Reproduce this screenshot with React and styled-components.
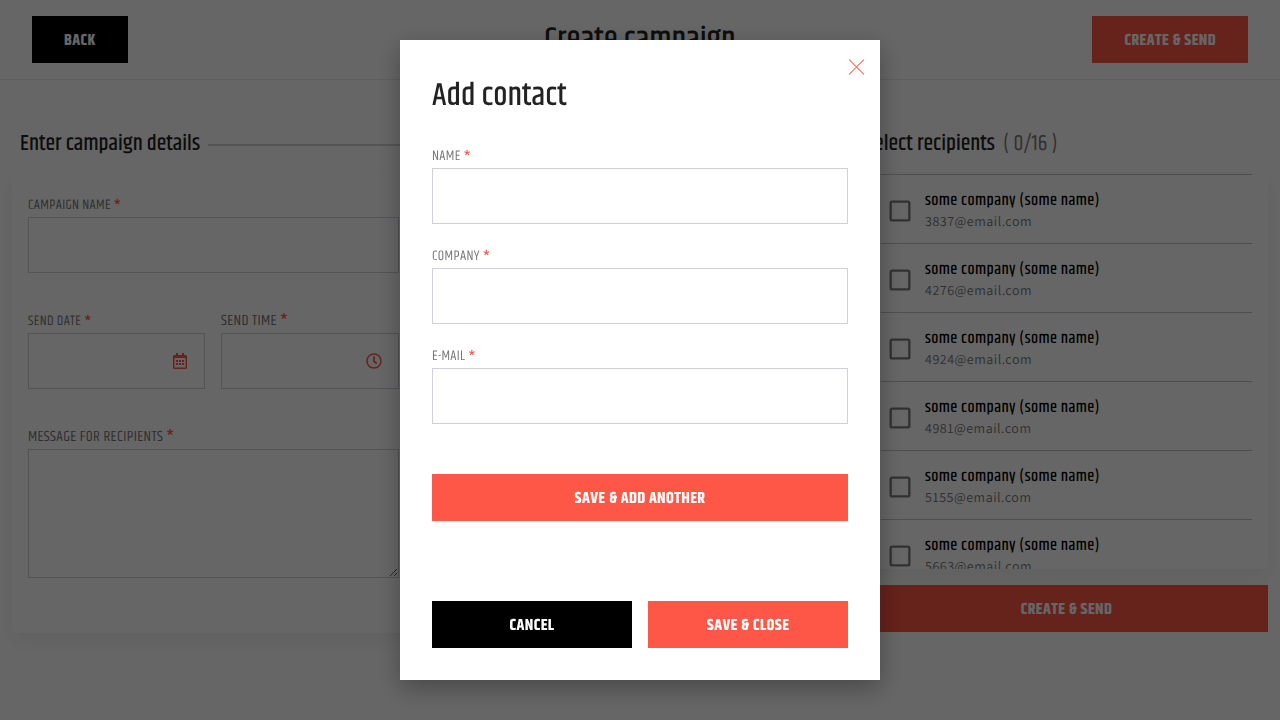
import React from "react";
import styled, { createGlobalStyle, css } from "styled-components";
import { FaRegCalendarAlt, FaRegClock } from "react-icons/fa";
import { MdCheckBoxOutlineBlank } from "react-icons/md";

const ACCENT = "#ff5747";

const GlobalStyle = createGlobalStyle`
  *, *::before, *::after { box-sizing: border-box; }
  html, body { margin: 0; height: 100%; overflow: hidden; background: #fff; }
  body {
    font-family: Khand, "Liberation Sans Narrow", Roboto, sans-serif;
    color: #222;
    text-rendering: geometricPrecision;
  }
  button, input, textarea { font: inherit; margin: 0; text-rendering: inherit; }
`;

const Page = styled.div`
  height: 720px;
  overflow: hidden;
  background: #fff;
`;

const Header = styled.header`
  display: grid;
  grid-template-columns: 1fr auto 1fr;
  align-items: start;
  height: 80px;
  padding: 16px 32px 0;
  border-bottom: 1px solid #ededee;
`;

const HeaderEnd = styled.div`
  display: flex;
  justify-content: flex-end;
`;

const HeaderStart = styled.div`
  display: flex;
`;

const PageTitle = styled.h1`
  margin: 0;
  font-size: 32px;
  line-height: 49px;
  font-weight: 500;
  white-space: nowrap;
`;

const Button = styled.button`
  display: flex;
  align-items: center;
  justify-content: center;
  height: 47px;
  padding: 2px 32px 0;
  border: 0;
  border-radius: 0;
  background: ${(p) => (p.$dark ? "#000" : ACCENT)};
  color: #fff;
  font-size: 16px;
  line-height: 25px;
  font-weight: 700;
  letter-spacing: 0.4px;
  white-space: nowrap;
  ${(p) => p.$block && css`width: 100%;`}
`;

const Columns = styled.main`
  display: flex;
  justify-content: space-between;
  padding: 48px 12px 0;
`;

const Column = styled.section`
  width: 403px;
`;

const SectionHead = styled.div`
  display: flex;
  align-items: center;
  height: 46px;
  padding: 0 0 14px ${(p) => (p.$flush ? 0 : 8)}px;
  white-space: nowrap;
`;

const SectionTitle = styled.h2`
  margin: 0;
  font-size: 22px;
  line-height: 32px;
  font-weight: 500;
  ${(p) => p.$width && css`width: ${p.$width}px; text-align: right;`}
`;

const Rule = styled.div`
  flex: 1;
  height: 2px;
  margin: 2px 0 0 8px;
  background: #d2d2d2;
`;

const Count = styled.span`
  margin-left: 8px;
  font-size: 22px;
  line-height: 32px;
  font-weight: 400;
  color: #757575;
`;

const Card = styled.div`
  background: #fff;
  box-shadow: 0 8px 18px rgba(0, 0, 0, 0.06);
`;

const FormCard = styled(Card)`
  display: flex;
  flex-direction: column;
  gap: 35px;
  height: 459px;
  padding: 18px 16px 0;
`;

const FieldRow = styled.div`
  display: grid;
  grid-template-columns: 177px 178px;
  gap: 16px;
`;

const FieldBox = styled.label`
  display: block;
`;

const LabelText = styled.span`
  display: flex;
  height: 25px;
  font-size: ${(p) => (p.$large ? 15 : 14)}px;
  line-height: 27px;
  font-weight: 400;
  letter-spacing: ${(p) => (p.$large ? 0.37 : 0.33)}px;
  color: #757575;
  white-space: nowrap;
`;

const Star = styled.span`
  margin-left: 3px;
  letter-spacing: 0;
  line-height: ${(p) => (p.$large ? 27 : 28)}px;
  font-weight: 500;
  color: ${ACCENT};
`;

const Control = styled.span`
  display: flex;
  align-items: center;
  height: 56px;
  border: 1px solid #d0d0dc;
  padding-right: ${(p) => p.$inset || 0}px;
  background: #fff;
  color: ${ACCENT};
`;

const Input = styled.input`
  flex: 1;
  min-width: 0;
  height: 100%;
  padding: 0 12px;
  border: 0;
  outline: 0;
  background: transparent;
`;

const TextArea = styled.textarea`
  display: block;
  width: 100%;
  height: 129px;
  border: 1px solid #d0d0d6;
  border-radius: 0;
  outline: 0;
  background: #fff;
  resize: both;
`;

function Field({ label, large, icon, inset, multiline }) {
  return (
    <FieldBox>
      <LabelText $large={large}>
        {label}
        <Star $large={large}>*</Star>
      </LabelText>
      {multiline ? <TextArea /> : (
        <Control $inset={inset}>
          <Input />
          {icon}
        </Control>
      )}
    </FieldBox>
  );
}

const ListCard = styled(Card)`
  height: 395px;
  padding: 0 16px;
  margin-bottom: 16px;
  overflow: hidden;
`;

const Recipient = styled.div`
  display: flex;
  height: 69px;
  border-top: 1px solid #c6c6c6;
  padding: 22px 0 0 5px;
`;

const CheckIcon = styled(MdCheckBoxOutlineBlank)`
  flex: none;
  width: 28px;
  height: 28px;
  color: #7c7c7c;
`;

const RecipientText = styled.div`
  display: flex;
  flex-direction: column;
  margin: -9px 0 0 11px;
  white-space: nowrap;
`;

const Company = styled.div`
  height: 24px;
  font-size: 16px;
  line-height: 25px;
  font-weight: 500;
  letter-spacing: 0.4px;
  color: #000;
`;

const Email = styled.div`
  height: 20px;
  font-family: Assistant, "Source Sans Pro", "Noto Sans CJK SC", sans-serif;
  font-size: 14px;
  line-height: 20px;
  letter-spacing: 0.5px;
  color: #757575;
`;

const Overlay = styled.div`
  position: fixed;
  inset: 0;
  display: flex;
  align-items: center;
  justify-content: center;
  background: rgba(0, 0, 0, 0.6);
`;

const Dialog = styled.div`
  position: relative;
  display: flex;
  flex-direction: column;
  width: 480px;
  height: 640px;
  padding: 34px 32px 32px;
  background: #fff;
  box-shadow: 0 8px 24px rgba(0, 0, 0, 0.3);
`;

const CloseButton = styled.button`
  position: absolute;
  top: 18px;
  right: 15px;
  width: 17px;
  height: 18px;
  padding: 0;
  border: 0;
  background: none;
  color: ${ACCENT};
  svg { display: block; }
`;

const DialogTitle = styled.h2`
  margin: 0 0 24px;
  font-size: 32px;
  line-height: 45px;
  font-weight: 500;
`;

const DialogFields = styled.div`
  display: flex;
  flex-direction: column;
  gap: 19px;
  margin-bottom: 50px;
`;

const DialogFooter = styled.div`
  display: grid;
  grid-template-columns: 1fr 1fr;
  gap: 16px;
  margin-top: auto;
`;

const EMAILS = ["3837", "4276", "4924", "4981", "5155", "5663"];

export default function App() {
  return (
    <>
      <GlobalStyle />
      <Page>
        <Header>
          <HeaderStart><Button $dark>BACK</Button></HeaderStart>
          <PageTitle>Create campaign</PageTitle>
          <HeaderEnd><Button>CREATE &amp; SEND</Button></HeaderEnd>
        </Header>
        <Columns>
          <Column>
            <SectionHead>
              <SectionTitle>Enter campaign details</SectionTitle>
              <Rule />
            </SectionHead>
            <FormCard>
              <Field label="CAMPAIGN NAME" />
              <FieldRow>
                <Field label="SEND DATE" inset={16} icon={<FaRegCalendarAlt size={16} />} />
                <Field label="SEND TIME" large inset={16} icon={<FaRegClock size={16} />} />
              </FieldRow>
              <Field label="MESSAGE FOR RECIPIENTS" large multiline />
            </FormCard>
          </Column>
          <Column>
            <SectionHead $flush>
              <SectionTitle $width={130}>Select recipients</SectionTitle>
              <Count>( 0/16 )</Count>
            </SectionHead>
            <ListCard>
              {EMAILS.map((id) => (
                <Recipient key={id}>
                  <CheckIcon />
                  <RecipientText>
                    <Company>some company (some name)</Company>
                    <Email>{`${id}@email.com`}</Email>
                  </RecipientText>
                </Recipient>
              ))}
            </ListCard>
            <Button $block>CREATE &amp; SEND</Button>
          </Column>
        </Columns>
      </Page>
      <Overlay>
        <Dialog role="dialog" aria-modal="true">
          <CloseButton aria-label="Close">
            <svg width="17" height="18" viewBox="0 0 17 18" fill="none" stroke="currentColor" strokeWidth="1.05">
              <path d="M1 1.5 L16 16.5 M16 1.5 L1 16.5" />
            </svg>
          </CloseButton>
          <DialogTitle>Add contact</DialogTitle>
          <DialogFields>
            <Field label="NAME" />
            <Field label="COMPANY" />
            <Field label="E-MAIL" />
          </DialogFields>
          <Button $block>SAVE &amp; ADD ANOTHER</Button>
          <DialogFooter>
            <Button $dark>CANCEL</Button>
            <Button>SAVE &amp; CLOSE</Button>
          </DialogFooter>
        </Dialog>
      </Overlay>
    </>
  );
}
